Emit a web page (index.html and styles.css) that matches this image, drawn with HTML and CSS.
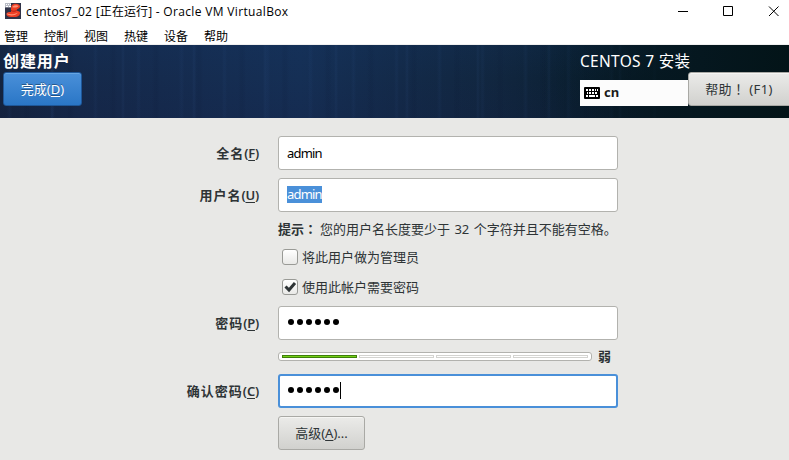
FILE: index.html
```html
<!DOCTYPE html>
<html lang="zh-CN">
<head>
<meta charset="utf-8">
<title>centos7_02</title>
<link rel="stylesheet" href="styles.css">
</head>
<body>
<header class="titlebar">
  <svg class="app-icon" width="16" height="16" viewBox="0 0 16 16">
    <rect width="16" height="16" fill="#303348"/>
    <path d="M6 6C6 3 7 1.500 9 1c3-.5 6 .5 6 2.500S11.500 6 11.500 7.500c2 .5 4 1 3.500 3-.5 3-4 4-8 3.500C3 14 1 12.500 1.500 10.500 2 9 4 9 6 9z" fill="#ee3f25"/>
    <path d="M7.500 3.500c2-1.500 4.500-1.500 6-.5-1 1.500-3.500 2-6 1.300zM2 10.500c3 1.300 8 1 11-1-2 3-8 4-11 1.500z" fill="#ff9478"/>
    <path d="M6 7.500c2 1 3.500 1 5.500 0" stroke="#b02018" fill="none"/>
    <path d="M0 0h6v4.500H0z" fill="#b9bcc5"/>
    <path d="M1 1.500h1M3 1.500h1M5 1.500h1M1 3.500h2M4 3.500h2" stroke="#fff"/>
  </svg>
  <span class="title">centos7_02 <span class="state">[正在运行]</span> - Oracle VM VirtualBox</span>
  <svg class="window-controls" width="110" height="24" viewBox="0 0 110 24" fill="none" stroke="#000">
    <path d="M7 11.500h10M52.500 6.500h9v9h-9zM98 6.500l9.500 9.500M107.500 6.500L98 16"/>
  </svg>
</header>
<nav class="menubar"><span>管理</span><span>控制</span><span>视图</span><span>热键</span><span>设备</span><span>帮助</span></nav>
<section class="banner">
  <div class="banner-left">
    <h1>创建用户</h1>
    <button class="btn primary">完成(<u>D</u>)</button>
  </div>
  <div class="banner-right">
    <div class="product">CENTOS 7 安装</div>
    <div class="tools">
      <div class="layout">
        <svg width="16" height="12" viewBox="0 0 16 12">
          <rect width="16" height="12" rx="1" fill="#000"/>
          <path d="M2 3h2M5 3h2M8 3h2M11 3h1M13 3h1M3 6h1M5 6h2M8 6h2M11 6h2M2 9h2M5 9h6M12 9h2" stroke="#fff" stroke-width="2"/>
        </svg>
        <b>cn</b>
      </div>
      <button class="btn help">帮助<span class="mark" lang="zh-TW">！</span> (F1)</button>
    </div>
  </div>
</section>
<main class="form">
  <div class="row"><label>全名<span>(<u>F</u>)</span></label><div class="field">admin</div></div>
  <div class="row"><label>用户名<span>(<u>U</u>)</span></label><div class="field"><span class="selected">admin</span></div></div>
  <p class="hint"><b>提示<span class="mark" lang="zh-TW">：</span></b><span>您的用户名长度要少于 32 个字符并且不能有空格。</span></p>
  <div class="check"><i class="box"></i>将此用户做为管理员</div>
  <div class="check second"><i class="box"><svg width="14" height="14" viewBox="0 0 14 14"><path d="M2.500 6.500L6 10 12 3" fill="none" stroke="#2e3436" stroke-width="3"/></svg></i>使用此帐户需要密码</div>
  <div class="row"><label>密码<span>(<u>P</u>)</span></label><div class="field"><span class="dots"><i></i><i></i><i></i><i></i><i></i><i></i></span></div></div>
  <div class="strength"><div class="meter"><i class="on"></i><i></i><i></i><i></i></div><b>弱</b></div>
  <div class="row"><label>确认密码<span>(<u>C</u>)</span></label><div class="field focused"><span class="dots"><i></i><i></i><i></i><i></i><i></i><i></i></span><span class="caret"></span></div></div>
  <button class="btn advanced">高级(<u>A</u>)...</button>
</main>
</body>
</html>
```
FILE: styles.css
```css
* { box-sizing: border-box; }
body {
  margin: 0;
  width: 789px;
  height: 460px;
  overflow: hidden;
  background: #e8e8e6;
  color: #2e3436;
  font: 13px/18px "Noto Sans", "Noto Sans CJK SC", sans-serif;
}
u { text-decoration-thickness: 1px; text-underline-offset: 2px; }
.titlebar {
  display: flex;
  height: 24px;
  padding-left: 5px;
  background: #fff;
  color: #000;
}
.app-icon { margin: 3px 5px 0 0; }
.title { font: 12px/24px "Open Sans", "Noto Sans CJK SC", sans-serif; letter-spacing: .34px; white-space: nowrap; }
.state { letter-spacing: .1px; }
.window-controls { margin-left: auto; margin-right: 8px; }
.menubar {
  display: flex;
  gap: 16px;
  height: 21px;
  padding-left: 4px;
  background: #fff;
  border-bottom: 1px solid #f0f0f0;
  color: #000;
  font: 12px/24px "Noto Sans CJK SC", sans-serif;
}
.banner {
  display: flex;
  justify-content: space-between;
  height: 73px;
  color: #fff;
  background:
    linear-gradient(90deg, transparent 540px, #05171f 700px, #031418 789px),
    linear-gradient(rgba(20, 60, 110, .14), transparent 45%, rgba(20, 25, 60, .16)),
    repeating-linear-gradient(90deg, transparent 0 7px, rgba(50, 90, 150, .08) 9px 10px, transparent 12px 23px, rgba(5, 15, 40, .08) 26px 28px, transparent 31px 43px),
    repeating-linear-gradient(90deg, transparent 0 50px, rgba(60, 100, 160, .1) 52px, transparent 54px 71px),
    linear-gradient(90deg, #14243f 0, #15294a 80px, #152c50 200px, #152f55 300px, #132a49 400px, #11263f 500px, #0b2033 580px, #05171f 700px, #031418 789px);
}
.banner-left { padding: 5px 0 0 3px; }
h1 { margin: 0; font-size: 16px; line-height: 22px; letter-spacing: .9px; }
.btn {
  display: block;
  height: 34px;
  padding: 0;
  border: 1px solid #a9a9a5;
  border-radius: 3px;
  background: linear-gradient(#ebebe9, #d1d1ce);
  box-shadow: inset 0 1px #f5f5f3;
  color: #2e3436;
  font: inherit;
}
.primary {
  width: 79px;
  border-color: #1e5799;
  background: linear-gradient(#4a90d9, #2a76c6);
  box-shadow: inset 0 1px #66a5e2;
  color: #fff;
  text-shadow: 0 -1px rgba(0, 0, 0, .35);
}
.banner-right { width: 209px; padding-top: 5px; }
.product { font-size: 15.5px; line-height: 22px; letter-spacing: .3px; white-space: nowrap; }
.tools { display: flex; }
.layout {
  display: flex;
  align-items: center;
  gap: 4px;
  width: 108px;
  height: 26px;
  margin-top: 8px;
  padding: 0 0 1px 4px;
  background: #fcfcfc;
  color: #1a1a1a;
}
.layout b { line-height: 16px; margin-top: -1px; }
.mark { font-family: "Noto Sans CJK TC", sans-serif; line-height: 1; }
.help { width: 104px; margin-right: -3px; padding-right: 2px; flex: none; white-space: pre; letter-spacing: .4px; }
.form { padding: 18px 0 0 149px; }
.row { display: flex; align-items: center; gap: 19px; height: 34px; margin-bottom: 8px; }
label { width: 110px; text-align: right; font-weight: 700; white-space: nowrap; letter-spacing: 1px; }
label span { font-weight: 600; letter-spacing: -.2px; }
.field {
  display: flex;
  align-items: center;
  width: 340px;
  height: 34px;
  padding: 0 8px 1px;
  border: 1px solid #b2b2ae;
  border-radius: 3px;
  background: #fff;
  color: #000;
  font-size: 13px;
  letter-spacing: -.8px;
}
.selected { height: 17px; line-height: 16px; background: #4a90d9; color: #fff; }
.focused { border: 2px solid #4a90d9; padding: 0 7px 1px; }
.hint { display: flex; gap: 3px; height: 18px; margin: 0 0 11px 129px; white-space: nowrap; word-spacing: 1px; }
.check { display: flex; align-items: center; gap: 4px; height: 16px; margin-left: 133px; }
.second { margin-top: 14px; margin-bottom: 11px; }
.box {
  width: 16px;
  height: 16px;
  border: 1px solid #999a96;
  border-radius: 3px;
  background: linear-gradient(#fff, #e9e9e7);
}
.box svg { display: block; }
.dots { display: flex; gap: 3px; padding-left: 1px; margin-top: -1px; }
.dots i { width: 6px; height: 6px; border-radius: 50%; background: #000; }
.caret { width: 1px; height: 17px; margin-left: 1px; background: #000; }
.strength { display: flex; align-items: center; gap: 6px; height: 18px; margin: -1px 0 9px 129px; }
.meter {
  display: flex;
  gap: 2px;
  width: 314px;
  height: 9px;
  padding: 2px 3px;
  border: 1px solid #b2b2ae;
  border-radius: 3px;
  background: #fff;
}
.meter i { flex: 1; border: 1px solid #d3d3d0; }
.meter .on { border-color: #3f7f0c; background: #73d216; }
.advanced { width: 87px; margin-left: 129px; }
```
